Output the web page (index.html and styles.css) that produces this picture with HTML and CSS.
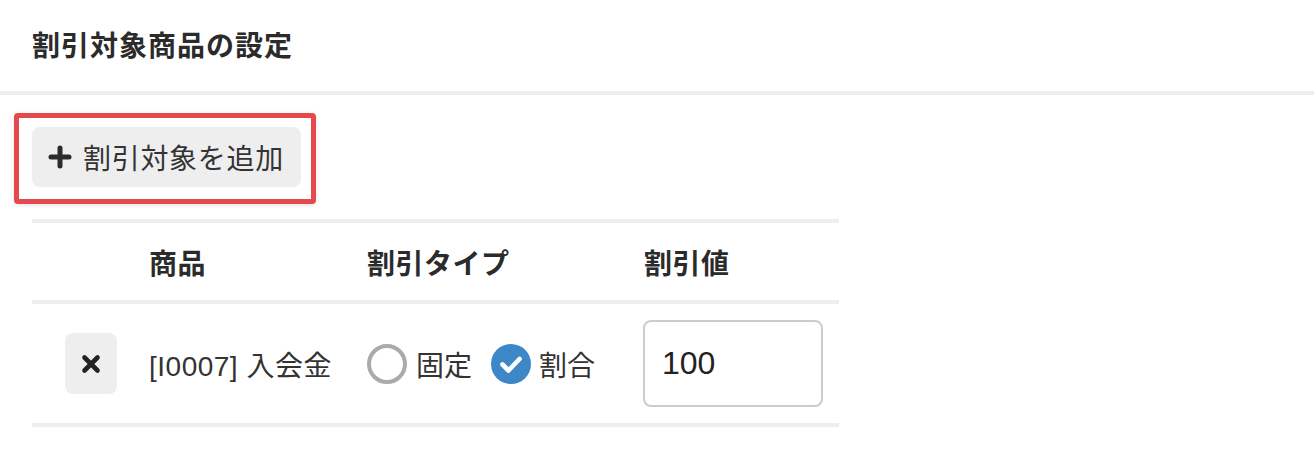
FILE: index.html
```html
<!DOCTYPE html>
<html lang="ja">
<head>
<meta charset="utf-8">
<link rel="stylesheet" href="styles.css">
</head>
<body>
<div class="page">
  <div class="section-head">
    <h2 class="section-title">割引対象商品の設定</h2>
  </div>
  <div class="section-body">
    <div class="actions">
      <button class="add-btn" type="button">
        <svg class="plus" width="24" height="24" viewBox="0 0 24 24"><path d="M12 3v18M3 12h18" stroke="#2b2b2b" stroke-width="5" stroke-linecap="round" fill="none"/></svg>
        <span>割引対象を追加</span>
      </button>
    </div>
    <div class="table">
      <div class="row head-row">
        <div class="cell"></div>
        <div class="cell th">商品</div>
        <div class="cell th">割引タイプ</div>
        <div class="cell th">割引値</div>
      </div>
      <div class="row body-row">
        <div class="cell center">
          <button class="del-btn" type="button">
            <svg width="20" height="20" viewBox="0 0 20 20"><path d="M3.5 3.5l13 13M16.5 3.5l-13 13" stroke="#222" stroke-width="4.6" stroke-linecap="round" fill="none"/></svg>
          </button>
        </div>
        <div class="cell product">[I0007] 入会金</div>
        <div class="cell types">
          <span class="radio"></span><span class="opt-label">固定</span>
          <span class="radio checked">
            <svg width="40" height="40" viewBox="0 0 40 40"><path d="M11.5 20.5l6 6 11-11.5" stroke="#fff" stroke-width="4.6" stroke-linecap="round" stroke-linejoin="round" fill="none"/></svg>
          </span><span class="opt-label near">割合</span>
        </div>
        <div class="cell">
          <input class="value-input" type="text" value="100">
        </div>
      </div>
    </div>
  </div>
</div>
</body>
</html>
```

FILE: styles.css
```css
* { box-sizing: border-box; }
html, body { margin: 0; padding: 0; background: #fff; }
body {
  font-family: "Liberation Sans", "Noto Sans CJK JP", sans-serif;
  color: #333;
  width: 1314px;
  height: 454px;
  overflow: hidden;
}
.section-head {
  height: 95px;
  padding-left: 32px;
  border-bottom: 4px solid #eee;
  display: flex;
  align-items: center;
}
.section-title {
  margin: 0 0 4px 0;
  font-size: 28px;
  font-weight: 700;
  color: #2b2b2b;
  letter-spacing: 1px;
}
.section-body {
  padding: 32px 0 0 32px;
}
.actions { display: flex; }
.add-btn {
  position: relative;
  display: flex;
  align-items: center;
  gap: 11px;
  width: 269px;
  height: 60px;
  padding: 0 0 0 16px;
  border: none;
  border-radius: 8px;
  background: #eee;
  font-family: inherit;
  font-size: 28px;
  letter-spacing: 0.7px;
  color: #333;
}
.add-btn::after {
  content: "";
  position: absolute;
  left: -18px;
  top: -14px;
  right: -15px;
  bottom: -17px;
  border: 5px solid #e5484d;
  border-radius: 4px;
  box-shadow: 0 1px 4px rgba(0,0,0,0.12);
}
.plus { display: block; }
.table {
  margin-top: 32px;
  width: 807px;
  border-top: 4px solid #eee;
}
.row {
  display: grid;
  grid-template-columns: 117px 218px 277px 195px;
  align-items: center;
  border-bottom: 4px solid #eee;
}
.head-row { height: 81px; }
.body-row { height: 123px; }
.cell {
  font-size: 28px;
  color: #333;
  display: flex;
  align-items: center;
}
.th { font-weight: 700; color: #2b2b2b; letter-spacing: 0.5px; }
.product { letter-spacing: 0.5px; }
.center { justify-content: center; }
.del-btn {
  width: 52px;
  height: 61px;
  border: none;
  border-radius: 8px;
  background: #eee;
  display: flex;
  align-items: center;
  justify-content: center;
  padding: 0;
}
.radio {
  width: 40px;
  height: 40px;
  border-radius: 50%;
  border: 4px solid #aaa;
  flex: none;
  display: flex;
  align-items: center;
  justify-content: center;
}
.radio.checked {
  border: none;
  background: #3d87c9;
}
.opt-label { margin-left: 9px; margin-right: 19px; }
.opt-label.near { margin-left: 8px; }
.value-input {
  width: 180px;
  height: 87px;
  border: 2px solid #ccc;
  border-radius: 8px;
  padding: 0 0 0 17px;
  font-family: inherit;
  font-size: 32px;
  color: #222;
  outline: none;
  margin-left: -1px;
}
```
